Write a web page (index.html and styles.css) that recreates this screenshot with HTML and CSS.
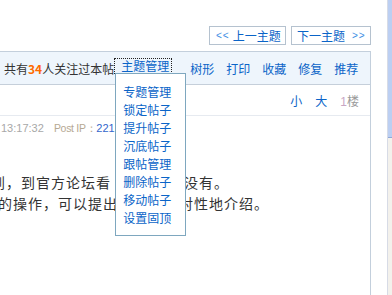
FILE: index.html
```html
<!DOCTYPE html>
<html>
<head>
  <title>帖子浏览</title>
  <link rel="stylesheet" href="styles.css">
</head>
<body>
  <div class="page">
    <div class="main">
      <div class="pager">
        <a class="pager-btn prev"><span class="arrow">&lt;&lt;</span>上一主题</a>
        <a class="pager-btn next">下一主题<span class="arrow">&gt;&gt;</span></a>
      </div>

      <div class="panel">
        <div class="toolbar">
          <span class="watch">共有<b>34</b>人关注过本帖</span>
          <span class="manage">
            <a class="manage-link">主题管理</a>
            <div class="dropdown">
              <a>专题管理</a>
              <a>锁定帖子</a>
              <a>提升帖子</a>
              <a>沉底帖子</a>
              <a>跟帖管理</a>
              <a>删除帖子</a>
              <a>移动帖子</a>
              <a>设置固顶</a>
            </div>
          </span>
          <a class="tool first">树形</a>
          <a class="tool">打印</a>
          <a class="tool">收藏</a>
          <a class="tool">修复</a>
          <a class="tool">推荐</a>
        </div>

        <div class="floor">
          <a>小</a>
          <a>大</a>
          <span class="floor-no"><em>1</em>楼</span>
        </div>

        <div class="meta">
          <span class="time">13:17:32</span>
          <span class="ip-label">Post IP：</span><a class="ip">221</a>
        </div>

        <!-- 中间部分被下拉菜单挡住 -->
        <div class="content">
          <div class="line one"><span>到，到官方论坛看</span><i class="gap"></i><span>没有。</span></div>
          <div class="line two"><span>的操作，可以提出</span><i class="gap"></i><span>对性地介绍。</span></div>
        </div>
      </div>
    </div>

    <div class="scrollbar">
      <div class="thumb"></div>
    </div>
  </div>
</body>
</html>
```

FILE: styles.css
```css
body {
  margin: 0;
  font-family: "Noto Sans CJK SC", "Liberation Sans", sans-serif;
  font-size: 12px;
  color: #333;
  background: #fff;
}

a {
  color: #0a64c8;
  text-decoration: none;
}

.page {
  display: flex;
  height: 295px;
  overflow: hidden;
}

.main {
  flex: 1;
  padding-top: 26px;
  padding-right: 16px;
}

.scrollbar {
  width: 4px;
  border-left: 1px solid #d7dbe6;
  background: #f3f1ec;
}

.thumb {
  height: 137px;
  background: #bccff2;
  border-bottom: 1px solid #8fa8d8;
}

/* 上一主题 / 下一主题 */
.pager {
  display: flex;
  justify-content: flex-end;
  gap: 5px;
}

.pager-btn {
  display: flex;
  align-items: center;
  box-sizing: border-box;
  height: 19px;
  border: 1px solid #b5c2cf;
  line-height: 17px;
}

.pager-btn.prev {
  width: 77px;
  padding-left: 6px;
}

.pager-btn.next {
  width: 80px;
  padding-left: 5px;
}

.arrow {
  font-family: "Liberation Sans", sans-serif;
  font-size: 10px;
  color: #3d8ee4;
  letter-spacing: 1px;
}

.prev .arrow {
  margin-right: 3px;
}

.next .arrow {
  margin-left: 7px;
}

/* 帖子面板 */
.panel {
  margin-top: 6px;
  border-top: 1px solid #c3cfdc;
  border-right: 1px solid #c3cfdc;
  height: 300px;
}

.toolbar {
  display: flex;
  align-items: center;
  height: 32px;
  padding-left: 4px;
  background: #eef5fc;
  border-bottom: 1px solid #c5cfda;
}

.watch b {
  color: #ff6a00;
  font-weight: bold;
}

.manage {
  position: relative;
  margin-left: 1px;
  margin-bottom: 4px;
}

.manage-link {
  display: block;
  height: 14px;
  line-height: 14px;
  padding: 0 2px 0 6px;
  outline: 1px dotted #222;
}

.dropdown {
  position: absolute;
  left: 0;
  top: 100%;
  z-index: 2;
  box-sizing: border-box;
  width: 71px;
  height: 163px;
  padding: 9px 0 8px 7px;
  background: #fff;
  border: 1px solid #7ea7bf;
}

.dropdown a {
  display: block;
  line-height: 18px;
}

.tool {
  margin-left: 12px;
}

.tool.first {
  margin-left: 19px;
}

/* 小 大 1楼 */
.floor {
  display: flex;
  justify-content: flex-end;
  align-items: center;
  gap: 13px;
  height: 30px;
  padding-right: 11px;
  border-bottom: 1px solid #e6eaf0;
}

.floor-no {
  color: #999;
}

.floor-no em {
  font-style: normal;
  font-family: "Liberation Sans", sans-serif;
  color: #c8a6c4;
}

.meta {
  height: 24px;
  line-height: 24px;
  padding-left: 1px;
  font-family: "Liberation Sans", sans-serif;
  font-size: 11px;
}

.time {
  color: #a8a8a8;
  margin-right: 7px;
}

.ip-label {
  color: #b6a893;
  font-size: 10.5px;
  letter-spacing: -0.3px;
}

.ip {
  color: #3366cc;
}

.content {
  margin-top: 32px;
  font-size: 14px;
  letter-spacing: 1px;
  color: #333;
  white-space: nowrap;
}

.line {
  display: flex;
  line-height: 21px;
}

.line.one {
  margin-left: -9px;
}

.line.one .gap {
  width: 73px;
}

.line.two {
  margin-left: -2px;
}

.line.two .gap {
  width: 61px;
}
```
